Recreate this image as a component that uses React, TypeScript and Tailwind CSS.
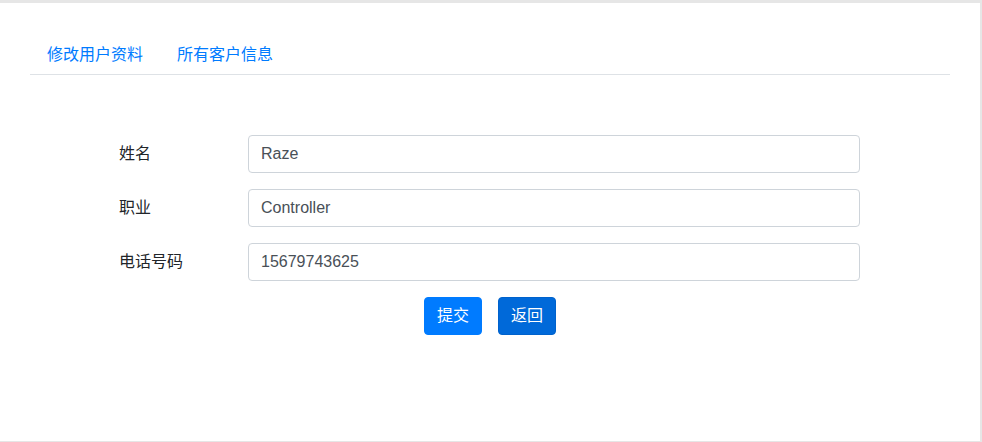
import React from "react";

const font = { fontFamily: '"Liberation Sans", "Noto Sans CJK SC", Arial, sans-serif' };

export default function App() {
  const rows = [
    { label: "姓名", value: "Raze" },
    { label: "职业", value: "Controller" },
    { label: "电话号码", value: "15679743625" },
  ];
  return (
    <div className="h-[442px] w-[982px] bg-[#e6e6e6] pt-[3px] pr-[2px] pb-px" style={font}>
      <div className="h-full bg-white px-[30px] pt-[30px]">
        <ul className="flex border-b border-[#dee2e6]">
          <li className="-mb-px">
            <a className="block border border-transparent px-4 pt-[9px] pb-[7px] text-base leading-6 text-[#007bff]">修改用户资料</a>
          </li>
          <li className="-mb-px">
            <a className="block border border-transparent px-4 pt-[9px] pb-[7px] text-base leading-6 text-[#007bff]">所有客户信息</a>
          </li>
        </ul>
        <div className="mt-[60px] ml-[89px] flex flex-col gap-4">
          {rows.map((r) => (
            <div key={r.label} className="flex items-center">
              <div className="w-[129px] text-base leading-6 text-[#212529]">{r.label}</div>
              <input
                readOnly
                value={r.value}
                className="h-[38px] w-[612px] rounded-[4px] border border-[#ced4da] bg-white px-3 text-base text-[#495057] outline-none"
                style={font}
              />
            </div>
          ))}
        </div>
        <div className="mt-4 flex justify-center gap-4">
          <button className="rounded-[4px] border border-[#007bff] bg-[#007bff] px-3 py-1.5 text-base leading-6 text-white">提交</button>
          <button className="rounded-[4px] border border-[#0062cc] bg-[#0069d9] px-3 py-1.5 text-base leading-6 text-white">返回</button>
        </div>
      </div>
    </div>
  );
}
